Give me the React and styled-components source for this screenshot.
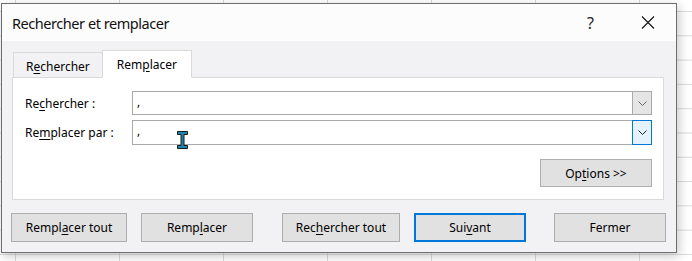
import React from 'react'
import styled, { createGlobalStyle } from "styled-components";

const Global = createGlobalStyle`
  html, body {
    margin: 0;
    padding: 0;
    width: 692px;
    height: 261px;
    overflow: hidden;
  }
  body {
    font-family: "Noto Sans", "Open Sans", sans-serif;
    background-color: #fff;
    background-image:
      linear-gradient(to right, #dadada 1px, transparent 1px),
      linear-gradient(to bottom, #dadada 1px, transparent 1px);
    background-size: 104px 24.3px;
    background-position: 15px 11px;
  }
`;

const Desk = styled.div`
  padding: 3px 0 0 1px;
`;

const Dialog = styled.div`
  width: 674px;
  height: 248px;
  border: 1px solid #6e6e6e;
  background: #f2f1f4;
  box-shadow: 2px 3px 10px rgba(0,0,0,0.22);
  display: flex;
  flex-direction: column;
  position: relative;
`;

const TitleBar = styled.div`
  height: 37px;
  background: #fcfcfc;
  display: flex;
  align-items: center;
  padding-left: 10px;
`;

const Title = styled.div`
  flex: 1;
  font-size: 14.5px;
  letter-spacing: -0.45px;
  color: #111;
`;

const TitleButton = styled.div`
  width: 57px;
  height: 37px;
  display: flex;
  align-items: center;
  justify-content: center;
  font-size: 16px;
  color: #222;
`;

const Body = styled.div`
  flex: 1;
  display: flex;
  flex-direction: column;
  padding: 9px 12px 0 10px;
`;

const Tabs = styled.div`
  display: flex;
  align-items: flex-end;
  height: 28px;
  padding-left: 1px;
  position: relative;
  z-index: 1;
  margin-bottom: -1px;
`;

const Tab = styled.div`
  height: ${({ $active }) => ($active ? "28px" : "25px")};
  margin-bottom: ${({ $active }) => ($active ? "0" : "1px")};
  margin-left: ${({ $active }) => ($active ? "-1px" : "0")};
  padding: ${({ $active }) => ($active ? "1px 14px 0" : "3px 12px 0")};
  display: flex;
  align-items: center;
  font-size: 12px;
  color: #000;
  background: ${({ $active }) => ($active ? "#fff" : "#f2f1f4")};
  border: 1px solid #d9d9d9;
  border-bottom: ${({ $active }) => ($active ? "1px solid #fff" : "none")};
  box-sizing: border-box;
`;

const Panel = styled.div`
  height: 123px;
  box-sizing: border-box;
  background: #fff;
  border: 1px solid #d9d9d9;
  padding: 13px 11px 0 12px;
  display: flex;
  flex-direction: column;
`;

const Row = styled.div`
  display: flex;
  align-items: center;
  height: ${({ $h }) => $h}px;
  margin-bottom: ${({ $mb }) => $mb || 0}px;
`;

const Label = styled.div`
  width: 107px;
  font-size: 12px;
  color: #000;
`;

const Combo = styled.div`
  flex: 1;
  height: 100%;
  box-sizing: border-box;
  border: 1px solid #a9a9a9;
  display: flex;
  align-items: stretch;
  font-size: 12px;
`;

const ComboText = styled.div`
  flex: 1;
  padding-left: 4px;
  line-height: 20px;
`;

const DropBtn = styled.div`
  width: 20px;
  box-sizing: border-box;
  margin: -1px -1px -1px 0;
  display: flex;
  align-items: center;
  justify-content: center;
  background: ${({ $focus }) => ($focus ? "#e5f1fb" : "#e5e5e5")};
  border: 1px solid ${({ $focus }) => ($focus ? "#0078d7" : "#a9a9a9")};
`;

const OptionsRow = styled.div`
  display: flex;
  justify-content: flex-end;
  margin-top: 14px;
`;

const Button = styled.div`
  flex-shrink: 0;
  width: ${({ $w }) => $w}px;
  height: ${({ $h }) => $h || 29}px;
  margin-left: ${({ $ml }) => $ml || 0}px;
  box-sizing: border-box;
  background: #e1e1e1;
  border: ${({ $default }) => ($default ? "2px solid #0078d7" : "1px solid #adadad")};
  display: flex;
  align-items: center;
  justify-content: center;
  font-size: 12px;
  color: #000;
`;

const ButtonBar = styled.div`
  display: flex;
  padding-top: 13px;
  margin-left: -1px;
`;

const Key = styled.span`
  text-decoration: underline;
  text-underline-offset: 2px;
`;

const Cursor = styled.svg`
  position: absolute;
  left: 175px;
  top: 127px;
`;

const Chevron = ({ color }) => (
  <svg width="9" height="5" viewBox="0 0 9 5">
    <path d="M0.5 0.5 L4.5 4.5 L8.5 0.5" fill="none" stroke={color} strokeWidth="1" />
  </svg>
);

const App = () => {
  return (
    <Desk>
      <Global />
      <Dialog>
        <TitleBar>
          <Title>Rechercher et remplacer</Title>
          <TitleButton>?</TitleButton>
          <TitleButton>
            <svg width="14" height="13" viewBox="0 0 14 13">
              <path d="M1 0.5 L13 12.5 M13 0.5 L1 12.5" stroke="#111" strokeWidth="1.1" fill="none" />
            </svg>
          </TitleButton>
        </TitleBar>
        <Body>
          <Tabs>
            <Tab>R<Key>e</Key>chercher</Tab>
            <Tab $active>Rem<Key>p</Key>lacer</Tab>
          </Tabs>
          <Panel>
            <Row $h={24} $mb={5}>
              <Label>Re<Key>c</Key>hercher :</Label>
              <Combo>
                <ComboText>,</ComboText>
                <DropBtn><Chevron color="#666" /></DropBtn>
              </Combo>
            </Row>
            <Row $h={25}>
              <Label>Re<Key>m</Key>placer par :</Label>
              <Combo>
                <ComboText>,</ComboText>
                <DropBtn $focus><Chevron color="#222" /></DropBtn>
              </Combo>
            </Row>
            <OptionsRow>
              <Button $w={112} $h={28}>Op<Key>t</Key>ions &gt;&gt;</Button>
            </OptionsRow>
          </Panel>
          <ButtonBar>
            <Button $w={116}>Rempl<Key>a</Key>cer tout</Button>
            <Button $w={112} $ml={14}>Remp<Key>l</Key>acer</Button>
            <Button $w={118} $ml={29}>Rec<Key>h</Key>ercher tout</Button>
            <Button $w={112} $ml={14} $default>Sui<Key>v</Key>ant</Button>
            <Button $w={112} $ml={28}>Fermer</Button>
          </ButtonBar>
        </Body>
        <Cursor width="11" height="18" viewBox="0 0 11 18">
          <path d="M0.5 0.5 H10.5 V3.5 H7 V14.5 H10.5 V17.5 H0.5 V14.5 H4 V3.5 H0.5 Z" fill="#1f86aa" stroke="#1a1a1a" strokeWidth="1" />
        </Cursor>
      </Dialog>
    </Desk>
  );
}

export default App
